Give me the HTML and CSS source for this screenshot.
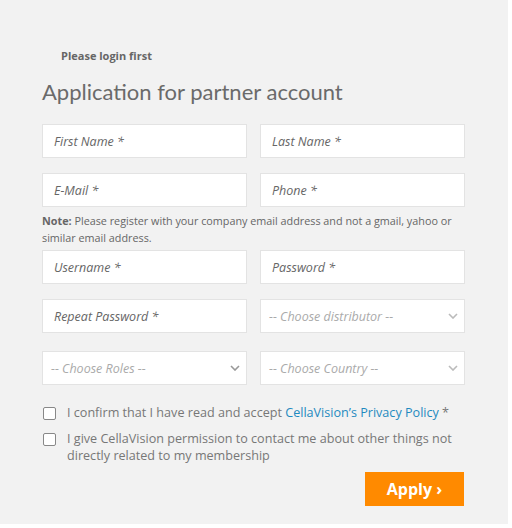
FILE: index.html
```html
<!DOCTYPE html>
<html>
<head>
<meta charset="utf-8">
<link rel="stylesheet" href="styles.css">
</head>
<body>
<div class="panel">
  <div class="login">Please login first</div>
  <h1 class="title">Application for partner account</h1>
  <div class="grid">
    <div class="field">First Name *</div>
    <div class="field">Last Name *</div>
    <div class="field">E-Mail *</div>
    <div class="field">Phone *</div>
  </div>
  <p class="note"><b>Note:</b> Please register with your company email address and not a gmail, yahoo or similar email address.</p>
  <div class="grid">
    <div class="field">Username *</div>
    <div class="field">Password *</div>
    <div class="field">Repeat Password *</div>
    <div class="field select">-- Choose distributor --<svg class="chev" viewBox="0 0 10 6" width="10" height="6"><path d="M1 1l4 4 4-4" fill="none" stroke="#bbb" stroke-width="1.6"/></svg></div>
  </div>
  <div class="grid selects">
    <div class="field select">-- Choose Roles --<svg class="chev" viewBox="0 0 10 6" width="10" height="6"><path d="M1 1l4 4 4-4" fill="none" stroke="#999" stroke-width="1.6"/></svg></div>
    <div class="field select">-- Choose Country --<svg class="chev" viewBox="0 0 10 6" width="10" height="6"><path d="M1 1l4 4 4-4" fill="none" stroke="#bbb" stroke-width="1.6"/></svg></div>
  </div>
  <div class="checks">
    <label class="check"><span class="box"></span><span>I confirm that I have read and accept <a class="link">CellaVision’s Privacy Policy</a> *</span></label>
    <label class="check"><span class="box"></span><span>I give CellaVision permission to contact me about other things not directly related to my membership</span></label>
  </div>
  <div class="actions"><button class="apply">Apply ›</button></div>
</div>
</body>
</html>
```
FILE: styles.css
```css
html, body { margin: 0; padding: 0; background: #fff; }
.panel {
  width: 508px;
  height: 524px;
  box-sizing: border-box;
  background: #f2f2f2;
  padding: 48px 44px 0 42px;
  font-family: "Open Sans", sans-serif;
  color: #666;
}
.login {
  font-size: 11px;
  font-weight: 700;
  line-height: 15px;
  margin-left: 19px;
  color: #666;
}
.title {
  margin: 14px 0 0 0;
  font-family: Lato, "Open Sans", sans-serif;
  font-size: 22px;
  font-weight: 400;
  line-height: 30px;
  color: #6a6a6a;
}
.grid {
  display: grid;
  grid-template-columns: 205px 205px;
  column-gap: 13px;
  row-gap: 15px;
  margin-top: 17px;
}
.field {
  height: 34px;
  box-sizing: border-box;
  background: #fff;
  border: 1px solid #e3e3e3;
  display: flex;
  align-items: center;
  padding-left: 11px;
  font-size: 12.5px;
  font-style: italic;
  color: #666;
}
.select {
  color: #aaa;
  padding-left: 8px;
  justify-content: space-between;
  padding-right: 6px;
}
.chev { flex: none; }
.note {
  margin: 5px 0 0 0;
  font-size: 10.8px;
  line-height: 17px;
  color: #666;
}
.note b { font-weight: 700; }
.note + .grid { margin-top: 4px; }
.grid.selects { margin-top: 18px; }
.checks {
  margin-top: 19px;
  display: flex;
  flex-direction: column;
  gap: 9px;
}
.check {
  display: flex;
  align-items: flex-start;
  font-size: 12.6px;
  line-height: 17px;
  color: #777;
}
.box {
  flex: none;
  width: 11px;
  height: 11px;
  border: 1px solid #888;
  border-radius: 2px;
  background: #fff;
  margin: 3px 11px 0 1px;
}
.link { color: #1f8ac0; text-decoration: none; }
.actions {
  display: flex;
  justify-content: flex-end;
  margin-top: 8px;
}
.apply {
  width: 99px;
  height: 34px;
  border: 0;
  background: #ff8a00;
  color: #fff;
  font-family: "Open Sans", sans-serif;
  font-weight: 700;
  font-size: 16px;
  padding: 0;
}
```
